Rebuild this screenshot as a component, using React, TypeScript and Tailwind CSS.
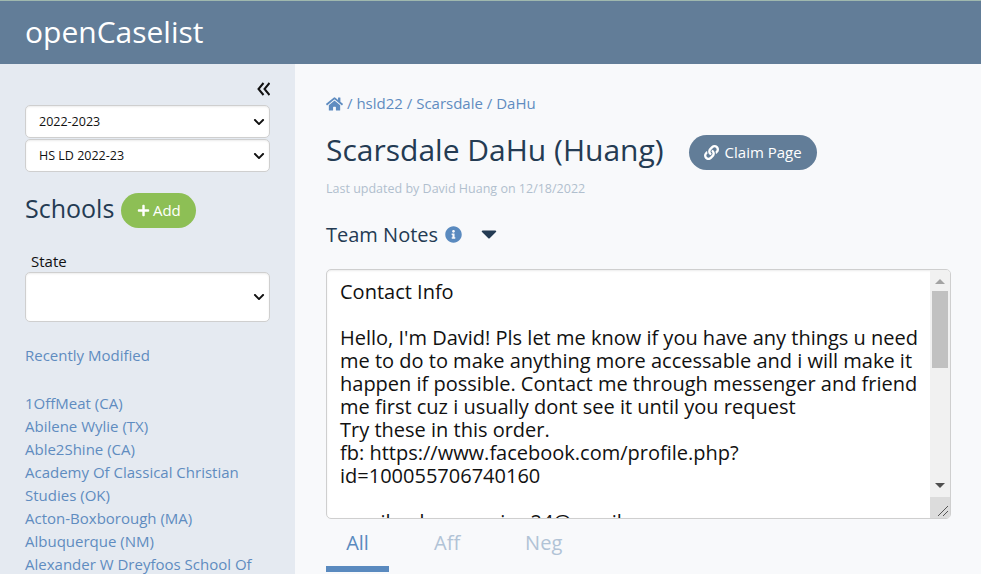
import React from "react";
import { FaChevronDown, FaHome, FaInfoCircle, FaLink, FaPlus, FaCaretDown } from "react-icons/fa";

const schools = [
  "1OffMeat (CA)",
  "Abilene Wylie (TX)",
  "Able2Shine (CA)",
  "Academy Of Classical Christian Studies (OK)",
  "Acton-Boxborough (MA)",
  "Albuquerque (NM)",
  "Alexander W Dreyfoos School Of Arts (FL)",
];

const notes = `Contact Info

Hello, I'm David! Pls let me know if you have any things u need me to do to make anything more accessable and i will make it happen if possible. Contact me through messenger and friend me first cuz i usually dont see it until you request
Try these in this order.
fb: https://www.facebook.com/profile.php?id=100055706740160

gmail: adsunmaniwc24@gmail.com`;

const Select: React.FC<{ label: string; className?: string }> = ({ label, className }) => (
  <div className={`relative ${className ?? ""}`}>
    <select className="h-full w-full appearance-none rounded-[5px] border border-[#cfcfcf] bg-white pl-[13px] pt-[2px] text-[12.5px] text-[#111] shadow-[inset_0_1px_2px_rgba(0,0,0,0.08)]">
      <option>{label}</option>
    </select>
    <FaChevronDown className="pointer-events-none absolute right-[5px] top-1/2 h-[12px] w-[12px] -translate-y-1/2 text-[#111]" />
  </div>
);

const App: React.FC = () => {
  return (
    <div className="flex h-screen flex-col overflow-hidden bg-[#f8f9fb] font-['Open_Sans',sans-serif] text-[#243b53]">
      <header className="h-[64px] shrink-0 border-t border-[#9fb8ae] bg-[#627d98] pl-[25px] pt-[10px]">
        <h1 className="text-[30px] leading-[41px] text-white">openCaselist</h1>
      </header>

      <div className="flex min-h-0 flex-1">
        <aside className="w-[295px] shrink-0 overflow-hidden bg-[#e5eaf1] pl-[25px] pr-[25px] pt-[15px]">
          <div className="flex h-[20px] items-center justify-end">
            <svg width="13" height="14" viewBox="0 0 13 14" fill="none" stroke="#111" strokeWidth="2">
              <path d="M6.5 1 L1.5 7 L6.5 13 M12.5 1 L7.5 7 L12.5 13" />
            </svg>
          </div>
          <Select label="2022-2023" className="mt-[6px] h-[33px]" />
          <Select label="HS LD 2022-23" className="mt-[1px] h-[33px]" />

          <div className="mt-[21px] flex h-[35px] items-center gap-[7px]">
            <h2 className="mb-[5px] text-[25px] leading-[34px]">Schools</h2>
            <button className="flex h-[35px] w-[75px] items-center justify-center gap-[3px] rounded-full bg-[#8dbf55] text-[15px] text-white">
              <FaPlus className="h-[13px] w-[13px]" />
              Add
            </button>
          </div>

          <label className="mt-[24px] block pl-[6px] text-[15px] leading-[19px] text-[#111]">State</label>
          <Select label="" className="mt-[1px] h-[50px]" />

          <a className="mt-[22px] block text-[15px] leading-[23px] text-[#5f8cc0]">Recently Modified</a>

          <ul className="mt-[25px] text-[15px] leading-[23px] text-[#5f8cc0]">
            {schools.map((s) => (
              <li key={s}>{s}</li>
            ))}
          </ul>
        </aside>

        <main className="min-w-0 flex-1 overflow-hidden pl-[31px] pr-[30px] pt-[30px]">
          <div className="flex items-center gap-[4px] text-[15px] leading-[19px] text-[#5f8cc0]">
            <FaHome className="h-[16px] w-[17px]" />
            <span>/ hsld22 / Scarsdale / DaHu</span>
          </div>

          <div className="mt-[19px] flex h-[41px] items-center gap-[25px]">
            <h2 className="mb-[6px] text-[30px] leading-[41px]">Scarsdale DaHu (Huang)</h2>
            <button className="flex h-[35px] w-[128px] items-center justify-center gap-[6px] rounded-full bg-[#627d98] text-[15px] text-white">
              <FaLink className="h-[15px] w-[15px]" />
              Claim Page
            </button>
          </div>

          <p className="mt-[8px] text-[12.5px] leading-[16px] text-[#b1bfce]">Last updated by David Huang on 12/18/2022</p>

          <div className="mt-[24px] flex h-[27px] items-center">
            <span className="text-[20px] leading-[27px]">Team Notes</span>
            <FaInfoCircle className="ml-[7px] h-[17px] w-[17px] text-[#5a8abf]" />
            <FaCaretDown className="ml-[19px] mb-[2px] h-[25px] w-[16px]" />
          </div>

          <div className="mt-[21px] flex h-[250px] overflow-hidden rounded-[5px] border border-[#cfcfcf] bg-white shadow-[inset_0_1px_2px_rgba(0,0,0,0.08)]">
            <div className="min-w-0 flex-1 overflow-hidden whitespace-pre-wrap pl-[13px] pr-[8px] pt-[10px] text-[20px] leading-[23px] text-[#111]">
              {notes}
            </div>
            <div className="flex w-[20px] shrink-0 flex-col bg-[#f1f1f1]">
              <div className="flex h-[21px] justify-center pt-[9px]">
                <div className="h-0 w-0 border-x-[5px] border-b-[5px] border-x-transparent border-b-[#a3a3a3]" />
              </div>
              <div className="flex-1 px-[2px]">
                <div className="h-[77px] bg-[#c1c1c1]" />
              </div>
              <div className="flex h-[20px] justify-center pt-[6px]">
                <div className="h-0 w-0 border-x-[5px] border-t-[5px] border-x-transparent border-t-[#505050]" />
              </div>
              <div className="flex h-[21px] items-end justify-end bg-[#dcdcdc] pb-[1px] pr-[1px]">
                <svg width="12" height="12" viewBox="0 0 12 12" stroke="#555" strokeWidth="1" fill="none">
                  <path d="M1 11 L11 1 M6 11 L11 6" />
                </svg>
              </div>
            </div>
          </div>

          <div className="mt-[10px] flex text-[20px] leading-[27px]">
            <div className="w-[63px] border-b-[6px] border-[#5a8abf] pb-[10px] text-center text-[#5a8abf]">All</div>
            <div className="ml-[45px] text-[#b1c3d6]">Aff</div>
            <div className="ml-[65px] text-[#b1c3d6]">Neg</div>
          </div>
        </main>
      </div>
    </div>
  );
};

export default App;
